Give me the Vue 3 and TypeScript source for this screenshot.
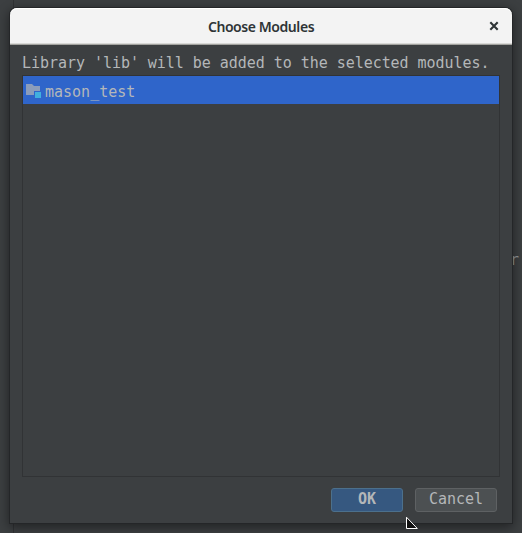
<script setup lang="ts">
import { ref } from 'vue'

const modules: string[] = ['mason_test']
const selected = ref<string>(modules[0])
</script>

<template>
  <main class="desktop">
    <span class="editor-text">r</span>
    <section class="dialog">
      <header class="titlebar">
        <h1>Choose Modules</h1>
        <button class="close" aria-label="Close">
          <svg width="10" height="10" viewBox="0 0 10 10"><path d="M1.3 1.3 8.7 8.7M8.7 1.3 1.3 8.7" stroke="#2e3436" stroke-width="2.1" /></svg>
        </button>
      </header>
      <div class="content">
        <p class="message">Library 'lib' will be added to the selected modules.</p>
        <ul class="list">
          <li v-for="name in modules" :key="name" class="item" :class="{ selected: name === selected }" @click="selected = name">
            <svg class="folder" width="16" height="14" viewBox="0 0 16 14">
              <path d="M0 0H6L8 2H14V7H8V11H0Z" fill="#8b9dbb" />
              <path d="M9 8H15V14H9Z" fill="#40b0df" />
            </svg>
            <span>{{ name }}</span>
          </li>
        </ul>
        <footer class="actions">
          <button class="btn primary">OK</button>
          <button class="btn secondary">Cancel</button>
        </footer>
      </div>
    </section>
    <svg class="cursor" width="14" height="14" viewBox="0 0 14 14">
      <path d="M.5 1.2V12.5H11.3Z" fill="#111" stroke="#fff" stroke-width="1" />
    </svg>
  </main>
</template>

<style>
body { margin: 0; overflow: hidden; }
</style>

<style scoped>
* { box-sizing: border-box; }
.desktop {
  position: relative;
  width: 522px;
  height: 533px;
  padding: 8px 10px 10px;
  overflow: hidden;
  background: linear-gradient(90deg, transparent 13px, #303234 13px, #303234 14px, transparent 14px), #3c3f41;
  font-family: "DejaVu Sans Mono", "Liberation Mono", monospace;
  font-size: 15px;
  color: #b4b7b9;
}
.editor-text {
  position: absolute;
  left: 510px;
  top: 250px;
  line-height: 20px;
  color: #92979b;
}
.dialog {
  position: relative;
  display: flex;
  flex-direction: column;
  width: 502px;
  height: 515px;
  border-radius: 7px 7px 0 0;
  background: #3c3f41;
  box-shadow: 0 0 0 1px #242628, 0 3px 12px 1px rgba(0, 0, 0, .48);
}
.titlebar {
  display: grid;
  grid-template-columns: 36px 1fr 36px;
  align-items: center;
  height: 37px;
  border-radius: 7px 7px 0 0;
  border-bottom: 1px solid #a3a39f;
  background: #f3f3f3;
  box-shadow: inset 0 1px #fff, inset 0 -1px #d8d8d6;
}
h1 {
  grid-column: 2;
  margin: 0;
  padding-top: 2px;
  font: 600 14px/20px "Noto Sans", "Open Sans", sans-serif;
  letter-spacing: -.43px;
  color: #2e3436;
  text-align: center;
  white-space: nowrap;
}
.close {
  display: grid;
  place-items: center;
  width: 36px;
  height: 36px;
  padding: 0;
  border: 0;
  background: none;
}
.content {
  flex: 1;
  display: flex;
  flex-direction: column;
  padding: 8px 12px 11px;
}
.message {
  margin: 0;
  height: 22px;
  line-height: 20px;
  letter-spacing: -.04px;
  white-space: pre;
}
.list {
  flex: none;
  height: 402px;
  margin: 0;
  padding: 0;
  border: 1px solid #313335;
  list-style: none;
}
.item {
  display: flex;
  align-items: flex-start;
  gap: 3px;
  height: 28px;
  padding: 6px 0 0 3px;
  line-height: 20px;
}
.item.selected { background: #2f65ca; }
.folder {
  flex: none;
  margin-top: 2px;
}
.actions {
  display: flex;
  justify-content: flex-end;
  gap: 12px;
  padding: 11px 3px 0 0;
}
.btn {
  height: 24px;
  padding: 0 0 2px;
  border: 1px solid #5e6163;
  border-radius: 3px;
  background: #4c5052;
  color: #b4b7b9;
  font: 15px/20px "DejaVu Sans Mono", "Liberation Mono", monospace;
}
.primary {
  width: 72px;
  border-color: #4c708c;
  background: #365880;
  font-weight: 700;
}
.secondary { width: 82px; }
.cursor {
  position: absolute;
  left: 406px;
  top: 516px;
}
</style>
